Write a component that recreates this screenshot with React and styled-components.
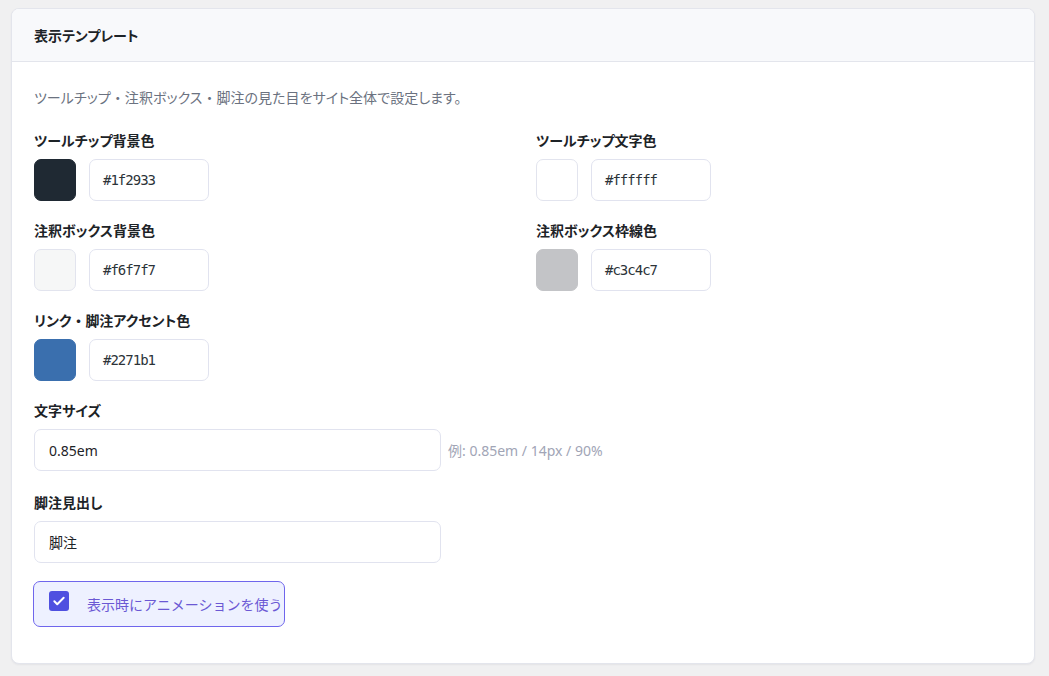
import React from 'react';
import styled, { createGlobalStyle } from 'styled-components';

const GlobalStyle = createGlobalStyle`
  html, body {
    margin: 0;
    padding: 0;
    background: #f0f0f1;
  }
  body {
    font-family: "Noto Sans", "Noto Sans CJK JP", sans-serif;
    color: #1d2327;
  }
`;

const Page = styled.div`
  padding: 8px 14px 12px 11px;
`;

const Card = styled.section`
  background: #ffffff;
  border: 1px solid #e3e5ec;
  border-radius: 8px;
  box-shadow: 0 1px 2px rgba(30, 35, 60, 0.06);
  overflow: hidden;
`;

const CardHeader = styled.header`
  height: 52px;
  display: flex;
  align-items: center;
  padding: 0 22px;
  background: #f8f9fb;
  border-bottom: 1px solid #e3e5ec;
`;

const Title = styled.h2`
  margin: 0;
  font-size: 14px;
  font-weight: 700;
  color: #1d2327;
  font-family: "Noto Sans CJK JP", sans-serif;
  font-feature-settings: "palt";
`;

const CardBody = styled.div`
  padding: 25px 22px 36px;
`;

const Description = styled.p`
  margin: 0 0 23px;
  font-size: 14px;
  line-height: 20px;
  color: #6b7280;
  font-family: "Noto Sans CJK JP", sans-serif;
  font-feature-settings: "palt";
  letter-spacing: 0.05px;
`;

/* the middle dot keeps its full width in the reference */
const Dot = styled.span`
  font-feature-settings: normal;
`;

const ColorGrid = styled.div`
  display: grid;
  grid-template-columns: 1fr 1fr;
  column-gap: 26px;
  row-gap: 19px;
  margin-bottom: 19px;
`;

const Field = styled.div`
  display: flex;
  flex-direction: column;
  margin-bottom: ${(p) => p.$gap || 0}px;
`;

const Label = styled.label`
  display: block;
  font-size: 14px;
  line-height: 20px;
  font-weight: 700;
  color: #1d2327;
  margin-bottom: 9px;
  font-family: "Noto Sans CJK JP", sans-serif;
  font-feature-settings: "palt";
`;

const ColorRow = styled.div`
  display: flex;
  align-items: center;
  gap: 13px;
`;

const Swatch = styled.div`
  width: 42px;
  height: 42px;
  box-sizing: border-box;
  border-radius: 7px;
  background: ${(p) => p.$color};
  border: 1px solid ${(p) => (p.$light ? '#e2e4ee' : p.$color)};
`;

const HexInput = styled.div`
  width: 120px;
  height: 42px;
  box-sizing: border-box;
  border: 1px solid #e1e3ef;
  border-radius: 7px;
  padding: 0 13px;
  display: flex;
  align-items: center;
  font-family: "DejaVu Sans Mono", monospace;
  font-size: 14px;
  letter-spacing: -1px;
  color: #2c3338;
  background: #fff;
`;

const InputRow = styled.div`
  display: flex;
  align-items: center;
  gap: 7px;
`;

const TextInput = styled.div`
  width: 407px;
  height: 42px;
  box-sizing: border-box;
  border: 1px solid #e1e3ef;
  border-radius: 7px;
  padding: 0 14px;
  display: flex;
  align-items: center;
  font-size: 14px;
  color: #1d2327;
  background: #fff;
`;

const Hint = styled.span`
  font-size: 14px;
  color: #a1a5b6;
  font-family: "Noto Sans", "Noto Sans CJK JP", sans-serif;
`;

const CheckLabel = styled.label`
  display: inline-flex;
  align-items: center;
  gap: 18px;
  box-sizing: border-box;
  height: 46px;
  padding: 0 2px 0 15px;
  border: 1px solid #6f66ec;
  border-radius: 7px;
  background: #eef1ff;
  color: #6b58d4;
  font-size: 14px;
  white-space: nowrap;
  font-family: "Noto Sans CJK JP", sans-serif;
  margin-left: -1px;
`;

const CheckBox = styled.span`
  width: 20px;
  height: 20px;
  border-radius: 3px;
  background: #4f50e0;
  display: flex;
  align-items: center;
  justify-content: center;
  flex-shrink: 0;
  margin-top: -7px;
`;

const colors = [
  { label: 'ツールチップ背景色', value: '#1f2933' },
  { label: 'ツールチップ文字色', value: '#ffffff', light: true },
  { label: '注釈ボックス背景色', value: '#f6f7f7', light: true },
  { label: '注釈ボックス枠線色', value: '#c3c4c7' },
  { label: ['リンク', '脚注アクセント色'], value: '#2271b1', swatch: '#3a6fae' },
];

const App = () => (
  <>
    <GlobalStyle />
    <Page>
      <Card>
        <CardHeader>
          <Title>表示テンプレート</Title>
        </CardHeader>
        <CardBody>
          <Description>
            ツールチップ<Dot>・</Dot>注釈ボックス<Dot>・</Dot>脚注の見た目をサイト全体で設定します。
          </Description>
          <ColorGrid>
            {colors.map((c) => (
              <Field key={c.value}>
                <Label>
                  {Array.isArray(c.label) ? (
                    <>
                      {c.label[0]}
                      <Dot>・</Dot>
                      {c.label[1]}
                    </>
                  ) : (
                    c.label
                  )}
                </Label>
                <ColorRow>
                  <Swatch $color={c.swatch || c.value} $light={c.light} />
                  <HexInput>{c.value}</HexInput>
                </ColorRow>
              </Field>
            ))}
          </ColorGrid>
          <Field $gap={21}>
            <Label>文字サイズ</Label>
            <InputRow>
              <TextInput>0.85em</TextInput>
              <Hint>例: 0.85em / 14px / 90%</Hint>
            </InputRow>
          </Field>
          <Field $gap={18}>
            <Label>脚注見出し</Label>
            <TextInput>脚注</TextInput>
          </Field>
          <CheckLabel>
            <CheckBox>
              <svg width="14" height="14" viewBox="0 0 24 24" fill="none">
                <path
                  d="M4 12.5l5 5L20 6.5"
                  stroke="#fff"
                  strokeWidth="3.4"
                  strokeLinecap="round"
                  strokeLinejoin="round"
                />
              </svg>
            </CheckBox>
            表示時にアニメーションを使う
          </CheckLabel>
        </CardBody>
      </Card>
    </Page>
  </>
);

export default App;
